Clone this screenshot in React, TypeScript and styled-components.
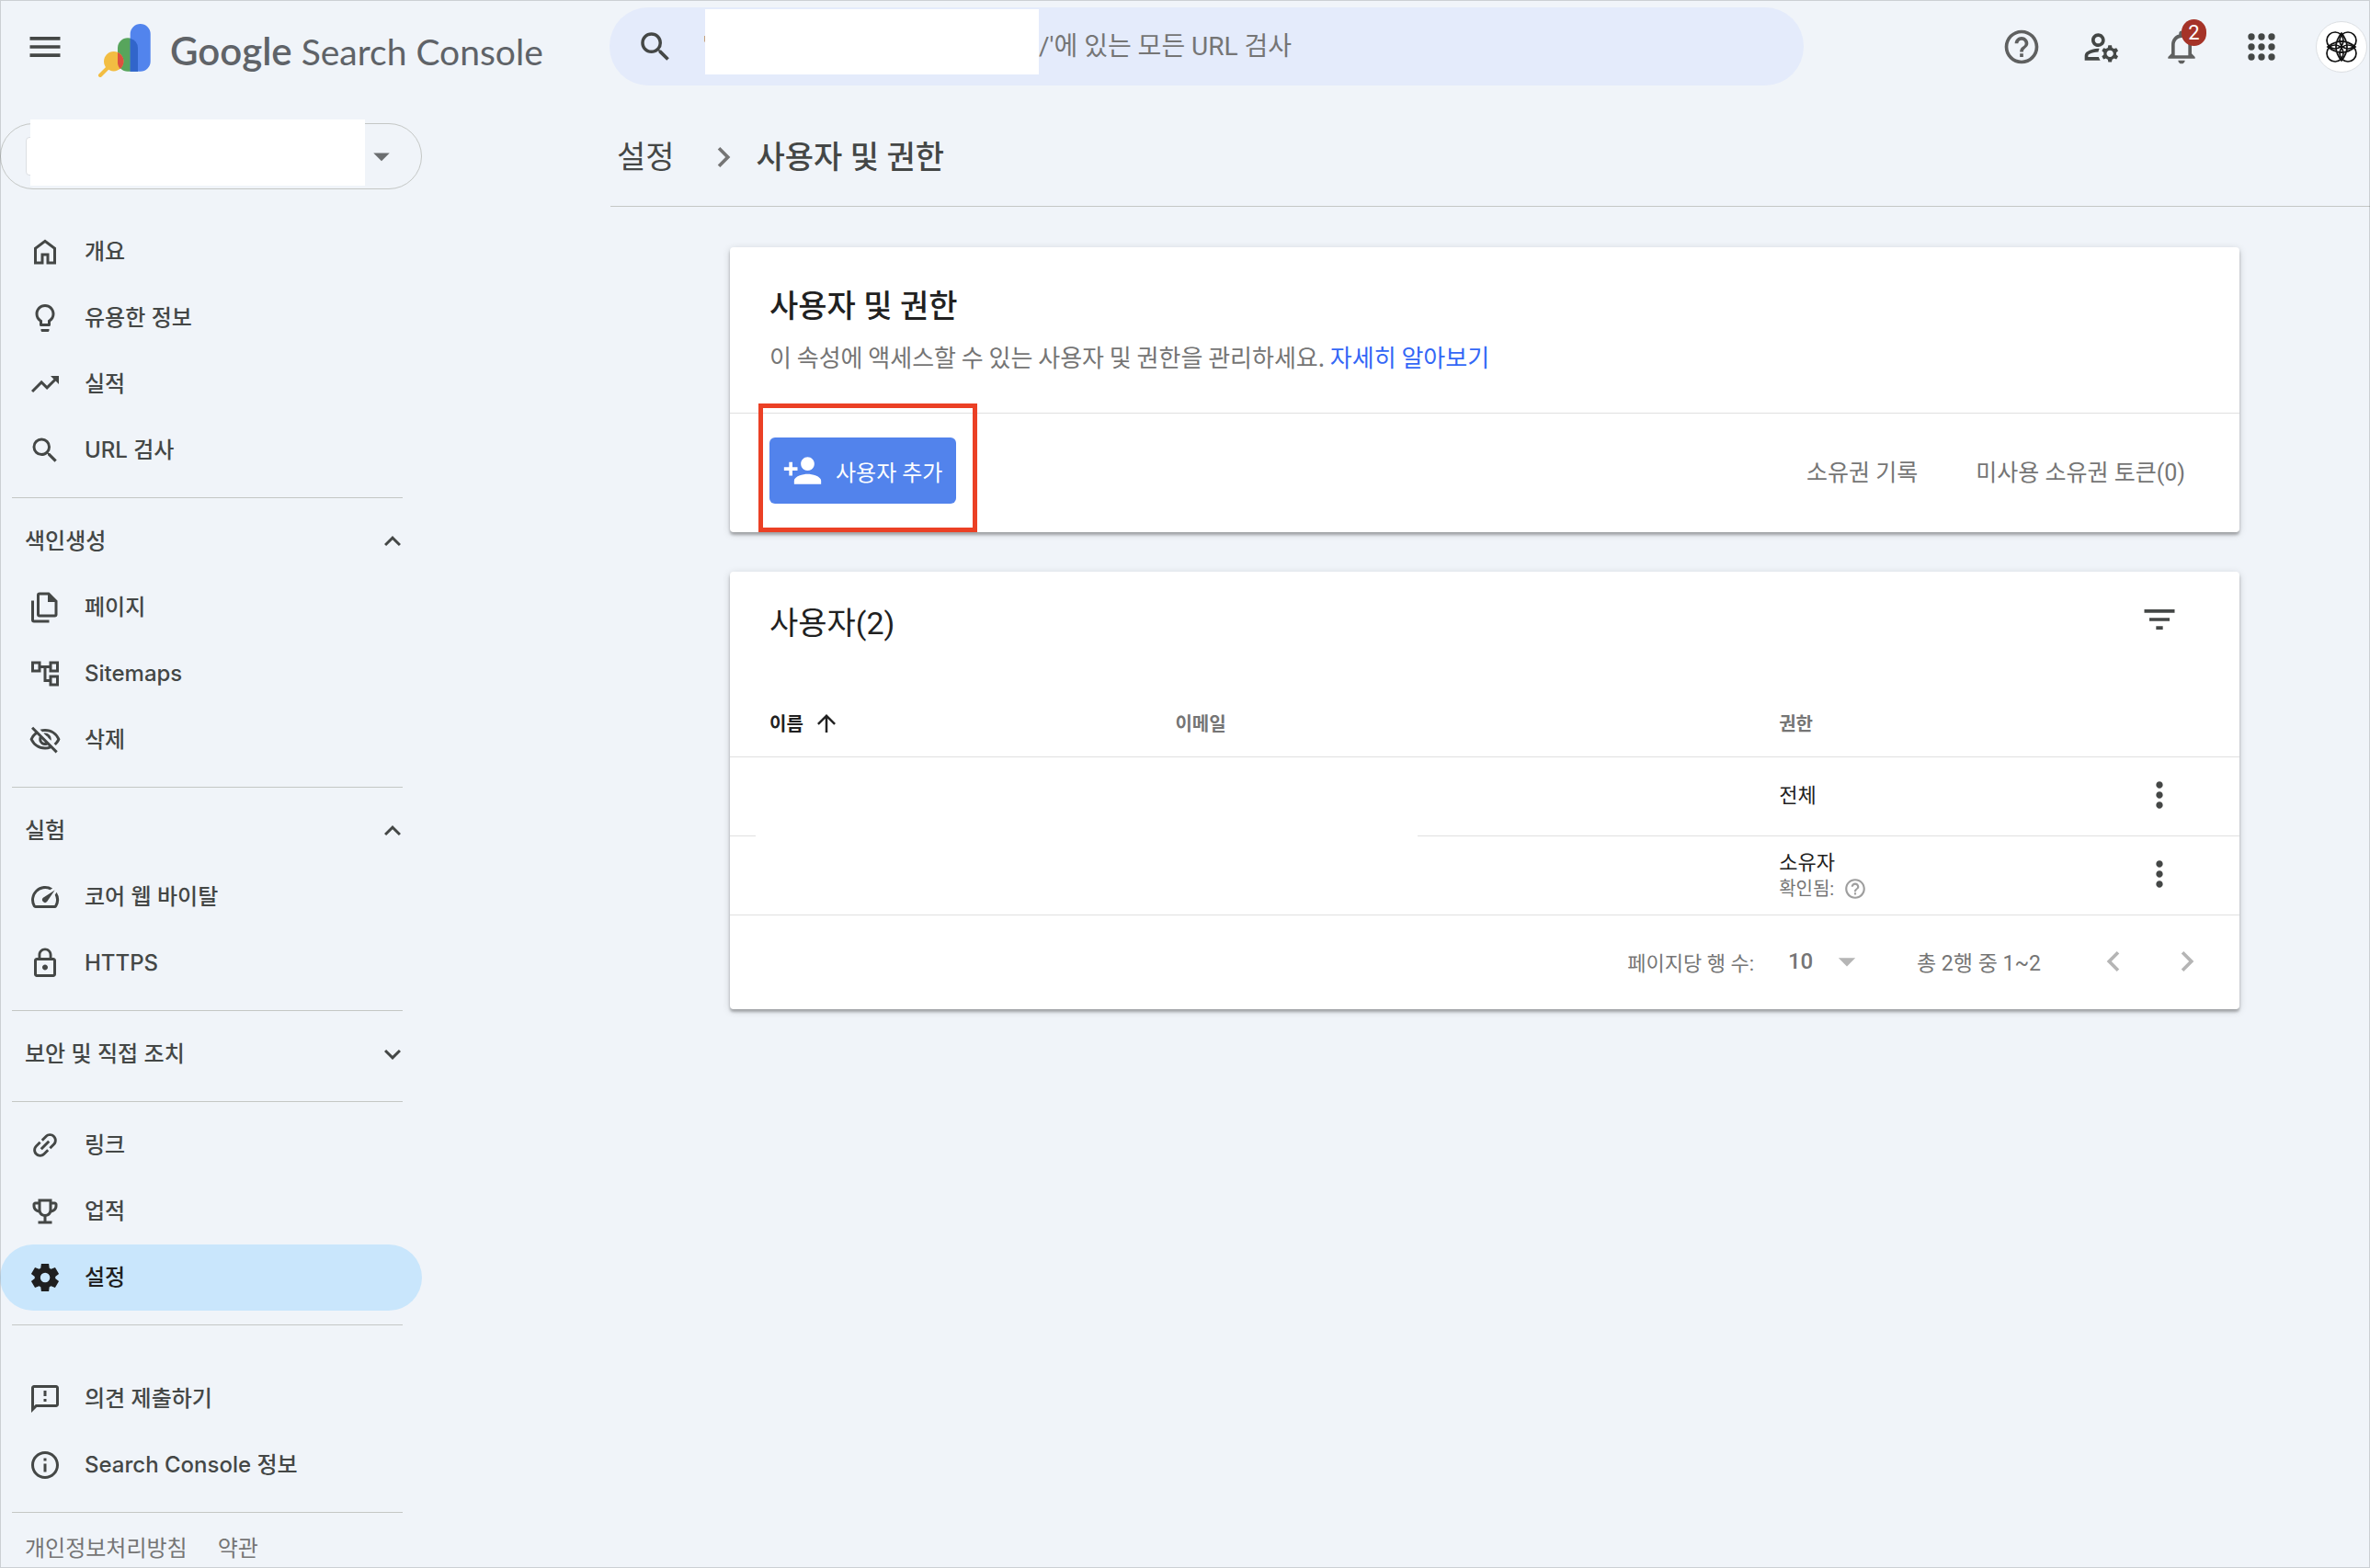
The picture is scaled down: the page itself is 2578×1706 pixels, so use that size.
import React from "react";
import styled, { createGlobalStyle } from "styled-components";
import {
  MdApps,
  MdArrowDropDown,
  MdArrowUpward,
  MdChevronLeft,
  MdChevronRight,
  MdExpandLess,
  MdExpandMore,
  MdFilterList,
  MdHelpOutline,
  MdInfoOutline,
  MdLightbulbOutline,
  MdLink,
  MdLockOutline,
  MdMenu,
  MdMoreVert,
  MdNotificationsNone,
  MdOutlineAccountTree,
  MdOutlineEmojiEvents,
  MdOutlineFeedback,
  MdOutlineManageAccounts,
  MdOutlineVisibilityOff,
  MdPersonAdd,
  MdSearch,
  MdSpeed,
  MdTrendingUp,
} from "react-icons/md";

const color = {
  page: "#f0f4f9",
  search: "#e4ebfb",
  active: "#c9e6fc",
  line: "#c4c7c5",
  tableLine: "#e0e0e0",
  ink: "#212121",
  text: "#444746",
  muted: "#757575",
  faint: "#b5b5b5",
  link: "#3367f6",
  blue: "#5283ec",
  badge: "#a53328",
  highlight: "#eb4025",
};

const uiFont = `Roboto, "Noto Sans CJK KR", sans-serif`;
const navFont = `Inter, "Noto Sans CJK KR", sans-serif`;

const GlobalStyle = createGlobalStyle`
  *, *::before, *::after { box-sizing: border-box; }
  body { margin: 0; background: ${color.page}; }
  button, input, select { font: inherit; color: inherit; }
  button { border: 0; padding: 0; background: none; cursor: pointer; }
  h1, h2, p, ul { margin: 0; padding: 0; }
  ul { list-style: none; }
  a { color: inherit; text-decoration: none; }
  svg { display: block; flex: none; }
`;

const Page = styled.div`
  position: relative;
  min-height: 100vh;
  background: ${color.page};
  color: ${color.text};
  font-family: ${uiFont};

  &::after {
    content: "";
    position: absolute;
    inset: 0;
    border: 1px solid rgba(60, 64, 67, 0.2);
    pointer-events: none;
  }
`;

/* Header */

const Header = styled.header`
  display: grid;
  grid-template-columns: 663px minmax(0, 1fr);
  padding: 8px 3px 0 0;
`;

const Brand = styled.div`
  display: flex;
  align-items: center;
  padding-left: 27px;
`;

const BrandLink = styled.a`
  display: flex;
  align-items: center;
  gap: 21px;
  margin-left: 35px;
  padding-top: 9px;
`;

const Wordmark = styled.span`
  font-family: Lato, sans-serif;
  font-size: 39px;
  line-height: 52px;
  color: #5f6368;
  white-space: nowrap;
`;

const WordmarkStrong = styled.span`
  font-size: 42px;
  font-weight: 600;
`;

const HeaderMain = styled.div`
  display: flex;
  align-items: center;
  gap: 209px;
`;

const SearchForm = styled.form`
  flex: 1;
  display: flex;
  align-items: center;
  height: 85px;
  border-radius: 42px;
  background: ${color.search};
  padding-left: 29px;
  font-size: 28px;
`;

const Quote = styled.span`
  width: 2px;
  margin-left: 31px;
  color: ${color.muted};
`;

const SearchMask = styled.span`
  position: relative;
  align-self: flex-start;
  width: 363px;
  height: 71px;
  margin-top: 2px;
  background: #fff;
`;

const SearchInput = styled.input`
  flex: 1;
  min-width: 0;
  height: 72px;
  margin-right: 42px;
  border: 0;
  padding: 0;
  outline: 0;
  background: none;

  &::placeholder {
    color: ${color.muted};
    opacity: 1;
  }
`;

const HeaderActions = styled.div`
  display: flex;
  align-items: center;
  gap: 31px;
`;

const IconButton = styled.button<{ $size?: number; $color?: string }>`
  position: relative;
  display: flex;
  align-items: center;
  justify-content: center;
  width: ${(p) => p.$size ?? 44}px;
  height: ${(p) => p.$size ?? 44}px;
  color: ${(p) => p.$color ?? color.text};
`;

const Badge = styled.span`
  position: absolute;
  top: -2px;
  right: 1px;
  width: 27px;
  height: 29px;
  border-radius: 14px;
  background: ${color.badge};
  color: #fff;
  font-size: 22px;
  line-height: 29px;
  text-align: center;
`;

const Avatar = styled(IconButton)`
  border: 1px solid #dcdfe3;
  border-radius: 50%;
  background: #fff;
`;

/* Sidebar */

const Body = styled.div`
  display: grid;
  grid-template-columns: 459px minmax(0, 1fr);
  column-gap: 205px;
  padding-top: 8px;
`;

const Sidebar = styled.aside`
  padding-top: 33px;
  font-family: ${navFont};
  font-size: 24px;
  line-height: 36px;
  font-weight: 500;
`;

const PropertyPicker = styled.button`
  position: relative;
  display: flex;
  align-items: center;
  justify-content: space-between;
  width: 100%;
  height: 72px;
  margin-bottom: 32px;
  padding: 0 22px 0 27px;
  border: 1px solid ${color.line};
  border-radius: 36px;
  color: #6b6e70;
`;

const Favicon = styled.span`
  width: 42px;
  height: 42px;
  border: 1px solid #dcdfe3;
  border-radius: 4px;
  background: #fff;
`;

const PickerMask = styled.span`
  position: absolute;
  top: -5px;
  left: 32px;
  right: 61px;
  height: 72px;
  background: #fff;
`;

const NavItem = styled.a<{ $active?: boolean }>`
  display: flex;
  align-items: center;
  gap: 25px;
  height: 72px;
  padding: 0 31px;
  border-radius: 36px;
  background: ${(p) => (p.$active ? color.active : "transparent")};
  color: ${(p) => (p.$active ? "#1f1f1f" : color.text)};
`;

const SectionToggle = styled.button`
  display: flex;
  align-items: center;
  justify-content: space-between;
  width: 100%;
  height: 72px;
  padding: 0 14px 0 27px;
  font-weight: 500;
`;

const Divider = styled.hr<{ $wide?: boolean }>`
  height: 1px;
  margin: 15px 21px ${(p) => (p.$wide ? 44 : 11)}px 13px;
  border: 0;
  background: ${color.line};
`;

const Legal = styled.footer`
  display: flex;
  gap: 33px;
  margin-top: 21px;
  padding: 0 27px;
  font-weight: 400;
  color: ${color.muted};
`;

/* Content */

const Main = styled.main`
  display: flex;
  flex-direction: column;
`;

const Breadcrumbs = styled.nav`
  display: flex;
  align-items: center;
  height: 124px;
  padding: 16px 7px 0;
  border-bottom: 1px solid ${color.line};
  font-size: 34px;
  line-height: 44px;
`;

const CrumbIcon = styled.span`
  margin: 0 14px 0 31px;
  color: ${color.muted};
`;

const Crumb = styled.span`
  font-weight: 500;
`;

const Cards = styled.div`
  display: flex;
  flex-direction: column;
  gap: 43px;
  padding: 44px 142px 44px 130px;
`;

const Card = styled.section`
  border-radius: 4px;
  background: #fff;
  box-shadow: 0 3px 3px rgba(0, 0, 0, 0.26), 0 2px 8px rgba(0, 0, 0, 0.16);
`;

const CardIntro = styled.div`
  padding: 42px 43px 43px;
  border-bottom: 1px solid ${color.tableLine};
`;

const Title = styled.h1`
  font-size: 34px;
  line-height: 44px;
  font-weight: 500;
  color: ${color.ink};
`;

const Description = styled.p`
  margin-top: 15px;
  font-family: "Noto Sans CJK KR", sans-serif;
  font-size: 26px;
  line-height: 36px;
  color: ${color.muted};
`;

const TextLink = styled.a`
  color: ${color.link};
`;

const CardActions = styled.div`
  display: flex;
  align-items: center;
  justify-content: space-between;
  padding: 26px 59px 31px 43px;
`;

const Highlight = styled.div`
  position: relative;

  &::after {
    content: "";
    position: absolute;
    inset: -37px -23px -31px -12px;
    border: 5px solid ${color.highlight};
    pointer-events: none;
  }
`;

const PrimaryButton = styled.button`
  display: flex;
  align-items: center;
  gap: 14px;
  height: 72px;
  padding: 0 15px 0 14px;
  border-radius: 6px;
  background: ${color.blue};
  color: #fff;
  font-size: 24px;
`;

const LinkGroup = styled.div`
  display: flex;
  gap: 63px;
  padding-top: 5px;
  color: ${color.muted};
  font-size: 25px;
  line-height: 36px;
`;

const CardHead = styled.div`
  display: flex;
  justify-content: space-between;
  height: 130px;
  padding: 30px 65px 0 43px;
`;

const Subtitle = styled.h2`
  font-size: 34px;
  line-height: 52px;
  font-weight: 400;
  color: ${color.ink};
`;

const Table = styled.table`
  width: 100%;
  table-layout: fixed;
  border-collapse: separate;
  border-spacing: 0;
`;

const HeadCell = styled.th<{ $width?: string; $sorted?: boolean }>`
  width: ${(p) => p.$width ?? "auto"};
  height: 72px;
  padding: 0 0 2px ${(p) => (p.$sorted ? 43 : 0)}px;
  border-bottom: 1px solid ${color.tableLine};
  text-align: left;
  font-size: 20px;
  font-weight: 700;
  color: ${(p) => (p.$sorted ? color.ink : color.muted)};
`;

const SortButton = styled.button`
  display: flex;
  align-items: center;
  gap: 10px;
`;

const Cell = styled.td`
  position: relative;
  height: 86px;
  padding: 0 0 1px;
  border-bottom: 1px solid ${color.tableLine};
  font-size: 22px;
  line-height: 30px;
  color: ${color.ink};
`;

const RowMask = styled.span`
  position: absolute;
  z-index: 1;
  top: 8px;
  left: 28px;
  width: 720px;
  height: 150px;
  background: #fff;
`;

const MenuCell = styled(Cell)`
  padding: 0 65px 4px;
`;

const Verified = styled.span`
  display: flex;
  align-items: center;
  gap: 10px;
  font-size: 20px;
  line-height: 26px;
  color: ${color.muted};
`;

const HelpIcon = styled.span`
  color: #9e9e9e;
`;

const Pagination = styled.div`
  display: flex;
  align-items: center;
  justify-content: flex-end;
  height: 102px;
  padding: 0 35px 2px 0;
  font-size: 22px;
  color: ${color.muted};
`;

const RowsSelectBox = styled.span`
  position: relative;
  display: flex;
  align-items: center;
  width: 74px;
  margin: 0 66px 0 37px;
`;

const RowsSelect = styled.select`
  appearance: none;
  width: 100%;
  height: 44px;
  padding: 0;
  border: 0;
  background: none;
  font-size: 24px;
  font-weight: 500;
`;

const SelectArrow = styled.span`
  position: absolute;
  right: -12px;
  color: ${color.faint};
  pointer-events: none;
`;

const RowRange = styled.span`
  font-size: 23px;
`;

const PageButtons = styled.div`
  display: flex;
  gap: 36px;
  margin-left: 57px;
`;

/* Drawings */

const Logo = () => (
  <svg width="58" height="58" viewBox="16 16 58 58" aria-hidden="true">
    <path d="M38 42.3a11 11 0 0 1 22 0V67.7H49a11 11 0 0 1-11-11z" fill="#57a55c" />
    <path d="M51.7 27a11 11 0 0 1 22 0v29.7a11 11 0 0 1-11 11h-11z" fill="#5284ed" />
    <path d="M51.7 31.7A11 11 0 0 1 60 42.3v25.4h-8.3z" fill="#3165ca" />
    <path d="M27 64l-8 8" stroke="#f2bd42" strokeWidth="4" strokeLinecap="round" />
    <circle cx="33.7" cy="56.7" r="10.7" fill="#f2bd42" />
    <path d="M38 46.9a10.7 10.7 0 0 1 2.7 18a11 11 0 0 1-2.7-8.2z" fill="#dc5040" />
  </svg>
);

const Knot = () => (
  <svg width="36" height="36" viewBox="-18 -18 36 36" fill="none" stroke="#111" strokeWidth="1.7" aria-hidden="true">
    <circle cx="-7" cy="-7" r="9" />
    <circle cx="7" cy="-7" r="9" />
    <circle cx="-7" cy="7" r="9" />
    <circle cx="7" cy="7" r="9" />
    <path d="M-15 0Q0-12 15 0Q0 12-15 0zM0-15Q12 0 0 15Q-12 0 0-15z" />
  </svg>
);

const Glyph = ({ d }: { d: string }) => (
  <svg width="36" height="36" viewBox="0 0 24 24" fill="currentColor" fillRule="evenodd" aria-hidden="true">
    <path d={d} />
  </svg>
);

const HOME = "M6 19h3v-6h6v6h3v-9l-6-4.5L6 10zm-2 2V9l8-6 8 6v12h-7v-6h-2v6H4z";
const PAGES =
  "M15 1l6 6v10a2 2 0 0 1-2 2H8a2 2 0 0 1-2-2V3a2 2 0 0 1 2-2zM14 8V3H8v14h11V8zM4 23a2 2 0 0 1-2-2V7h2v14h11v2z";
const GEAR =
  "m9.25 22-.4-3.2q-.325-.125-.612-.3-.288-.175-.563-.375L4.7 19.375l-2.75-4.75 2.575-1.95Q4.5 12.5 4.5 12.337v-.675q0-.162.025-.337L1.95 9.375l2.75-4.75 2.975 1.25q.275-.2.575-.375.3-.175.6-.3l.4-3.2h5.5l.4 3.2q.325.125.613.3.287.175.562.375l2.975-1.25 2.75 4.75-2.575 1.95q.025.175.025.337v.675q0 .163-.05.338l2.575 1.95-2.75 4.75-2.95-1.25q-.275.2-.575.375-.3.175-.6.3l-.4 3.2Zm2.8-6.5q1.45 0 2.475-1.025Q15.55 13.45 15.55 12q0-1.45-1.025-2.475Q13.5 8.5 12.05 8.5q-1.475 0-2.488 1.025Q8.55 10.55 8.55 12q0 1.45 1.012 2.475Q10.575 15.5 12.05 15.5Z";

const TiltedLink = styled(MdLink)`
  transform: rotate(-45deg);
`;

type Item = { label: string; icon: React.ReactNode; active?: boolean };

const overview: Item[] = [
  { label: "개요", icon: <Glyph d={HOME} /> },
  { label: "유용한 정보", icon: <MdLightbulbOutline size={36} /> },
  { label: "실적", icon: <MdTrendingUp size={36} /> },
  { label: "URL 검사", icon: <MdSearch size={36} /> },
];

const indexing: Item[] = [
  { label: "페이지", icon: <Glyph d={PAGES} /> },
  { label: "Sitemaps", icon: <MdOutlineAccountTree size={36} /> },
  { label: "삭제", icon: <MdOutlineVisibilityOff size={36} /> },
];

const experience: Item[] = [
  { label: "코어 웹 바이탈", icon: <MdSpeed size={36} /> },
  { label: "HTTPS", icon: <MdLockOutline size={36} /> },
];

const tools: Item[] = [
  { label: "링크", icon: <TiltedLink size={36} /> },
  { label: "업적", icon: <MdOutlineEmojiEvents size={36} /> },
  { label: "설정", icon: <Glyph d={GEAR} />, active: true },
];

const support: Item[] = [
  { label: "의견 제출하기", icon: <MdOutlineFeedback size={36} /> },
  { label: "Search Console 정보", icon: <MdInfoOutline size={36} /> },
];

const NavList = ({ items }: { items: Item[] }) => (
  <ul>
    {items.map((item) => (
      <li key={item.label}>
        <NavItem href="#" $active={item.active} aria-current={item.active ? "page" : undefined}>
          {item.icon}
          {item.label}
        </NavItem>
      </li>
    ))}
  </ul>
);

const NavSection = ({ label, items }: { label: string; items?: Item[] }) => (
  <>
    <SectionToggle type="button" aria-expanded={Boolean(items)}>
      {label}
      {items ? <MdExpandLess size={36} /> : <MdExpandMore size={36} />}
    </SectionToggle>
    {items && <NavList items={items} />}
  </>
);

export default function App() {
  return (
    <Page>
      <GlobalStyle />
      <Header>
        <Brand>
          <IconButton type="button" aria-label="메뉴">
            <MdMenu size={44} />
          </IconButton>
          <BrandLink href="#">
            <Logo />
            <Wordmark>
              <WordmarkStrong>Google</WordmarkStrong> Search Console
            </Wordmark>
          </BrandLink>
        </Brand>
        <HeaderMain>
          <SearchForm role="search" onSubmit={(e) => e.preventDefault()}>
            <IconButton type="submit" $size={42} aria-label="검색">
              <MdSearch size={42} />
            </IconButton>
            <Quote>'</Quote>
            <SearchMask />
            <SearchInput type="search" aria-label="URL 검사" placeholder="/'에 있는 모든 URL 검사" />
          </SearchForm>
          <HeaderActions>
            <IconButton type="button" $size={56} $color="#5f6060" aria-label="도움말">
              <MdHelpOutline size={44} />
            </IconButton>
            <IconButton type="button" $size={56} aria-label="사용자 설정">
              <MdOutlineManageAccounts size={44} />
            </IconButton>
            <IconButton type="button" $size={56} $color="#5f6060" aria-label="알림">
              <MdNotificationsNone size={44} />
              <Badge>2</Badge>
            </IconButton>
            <IconButton type="button" $size={56} aria-label="Google 앱">
              <svg width="44" height="44" viewBox="0 0 24 24" fill="currentColor" aria-hidden="true">
                {[6, 12, 18].map((y) => [6, 12, 18].map((x) => <circle key={`${x}-${y}`} cx={x} cy={y} r="2" />))}
              </svg>
            </IconButton>
            <Avatar type="button" $size={56} aria-label="계정">
              <Knot />
            </Avatar>
          </HeaderActions>
        </HeaderMain>
      </Header>

      <Body>
        <Sidebar>
          <PropertyPicker type="button" aria-label="속성 선택">
            <Favicon />
            <PickerMask />
            <MdArrowDropDown size={42} />
          </PropertyPicker>
          <nav>
            <NavList items={overview} />
            <Divider />
            <NavSection label="색인생성" items={indexing} />
            <Divider />
            <NavSection label="실험" items={experience} />
            <Divider />
            <NavSection label="보안 및 직접 조치" />
            <Divider />
            <NavList items={tools} />
            <Divider $wide />
            <NavList items={support} />
            <Divider />
          </nav>
          <Legal>
            <a href="#">개인정보처리방침</a>
            <a href="#">약관</a>
          </Legal>
        </Sidebar>

        <Main>
          <Breadcrumbs>
            <a href="#">설정</a>
            <CrumbIcon>
              <MdChevronRight size={44} />
            </CrumbIcon>
            <Crumb>사용자 및 권한</Crumb>
          </Breadcrumbs>
          <Cards>
            <Card>
              <CardIntro>
                <Title>사용자 및 권한</Title>
                <Description>
                  이 속성에 액세스할 수 있는 사용자 및 권한을 관리하세요. <TextLink href="#">자세히 알아보기</TextLink>
                </Description>
              </CardIntro>
              <CardActions>
                <Highlight>
                  <PrimaryButton type="button">
                    <MdPersonAdd size={44} />
                    사용자 추가
                  </PrimaryButton>
                </Highlight>
                <LinkGroup>
                  <a href="#">소유권 기록</a>
                  <a href="#">미사용 소유권 토큰(0)</a>
                </LinkGroup>
              </CardActions>
            </Card>

            <Card>
              <CardHead>
                <Subtitle>사용자(2)</Subtitle>
                <IconButton type="button" aria-label="필터">
                  <MdFilterList size={44} />
                </IconButton>
              </CardHead>
              <Table>
                <thead>
                  <tr>
                    <HeadCell $width="29.5%" $sorted aria-sort="ascending">
                      <SortButton type="button">
                        이름
                        <MdArrowUpward size={30} />
                      </SortButton>
                    </HeadCell>
                    <HeadCell $width="40%">이메일</HeadCell>
                    <HeadCell>권한</HeadCell>
                    <HeadCell $width="174px" />
                  </tr>
                </thead>
                <tbody>
                  <tr>
                    <Cell>
                      <RowMask />
                    </Cell>
                    <Cell />
                    <Cell>전체</Cell>
                    <MenuCell>
                      <IconButton type="button" aria-label="추가 작업">
                        <MdMoreVert size={44} />
                      </IconButton>
                    </MenuCell>
                  </tr>
                  <tr>
                    <Cell />
                    <Cell />
                    <Cell>
                      소유자
                      <Verified>
                        확인됨:
                        <HelpIcon>
                          <MdHelpOutline size={26} />
                        </HelpIcon>
                      </Verified>
                    </Cell>
                    <MenuCell>
                      <IconButton type="button" aria-label="추가 작업">
                        <MdMoreVert size={44} />
                      </IconButton>
                    </MenuCell>
                  </tr>
                </tbody>
              </Table>
              <Pagination>
                <label htmlFor="rows">페이지당 행 수:</label>
                <RowsSelectBox>
                  <RowsSelect id="rows" defaultValue="10">
                    <option value="10">10</option>
                    <option value="25">25</option>
                  </RowsSelect>
                  <SelectArrow>
                    <MdArrowDropDown size={44} />
                  </SelectArrow>
                </RowsSelectBox>
                <RowRange>총 2행 중 1~2</RowRange>
                <PageButtons>
                  <IconButton type="button" $color={color.faint} aria-label="이전 페이지">
                    <MdChevronLeft size={44} />
                  </IconButton>
                  <IconButton type="button" $color={color.faint} aria-label="다음 페이지">
                    <MdChevronRight size={44} />
                  </IconButton>
                </PageButtons>
              </Pagination>
            </Card>
          </Cards>
        </Main>
      </Body>
    </Page>
  );
}
